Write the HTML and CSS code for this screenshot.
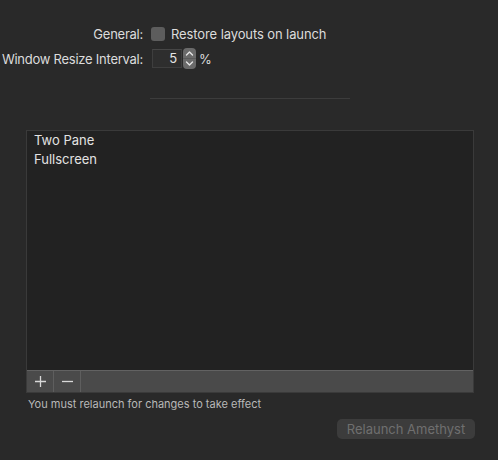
FILE: index.html
```html
<!DOCTYPE html>
<html>
<head>
<meta charset="utf-8">
<link rel="stylesheet" href="styles.css">
</head>
<body>
<div class="pane">
  <div class="form">
    <div class="label"><span>General:</span></div>
    <div class="control">
      <span class="checkbox"></span>
      <span class="text">Restore layouts on launch</span>
    </div>
    <div class="label"><span>Window Resize Interval:</span></div>
    <div class="control">
      <span class="numfield">5</span>
      <span class="stepper">
        <svg width="13" height="21" viewBox="0 0 13 21">
          <rect x="0" y="0" width="13" height="21" rx="4" fill="#6a6a6a"/>
          <line x1="0" y1="10.5" x2="13" y2="10.5" stroke="#5a5a5a" stroke-width="1"/>
          <path d="M3.5 7 L6.5 4 L9.5 7" fill="none" stroke="#e6e6e6" stroke-width="1.4" stroke-linecap="round" stroke-linejoin="round"/>
          <path d="M3.5 14 L6.5 17 L9.5 14" fill="none" stroke="#e6e6e6" stroke-width="1.4" stroke-linecap="round" stroke-linejoin="round"/>
        </svg>
      </span>
      <span class="text pct">%</span>
    </div>
  </div>
  <div class="separator"></div>
  <div class="listbox">
    <div class="list">
      <div class="row">Two Pane</div>
      <div class="row">Fullscreen</div>
    </div>
    <div class="toolbar">
      <span class="tbtn">
        <svg width="13" height="13" viewBox="0 0 13 13"><path d="M6.5 1 V12 M1 6.5 H12" stroke="#d8d8d8" stroke-width="1.3"/></svg>
      </span>
      <span class="tbtn">
        <svg width="13" height="13" viewBox="0 0 13 13"><path d="M1 6.5 H12" stroke="#d8d8d8" stroke-width="1.3"/></svg>
      </span>
      <span class="tfill"></span>
    </div>
  </div>
  <div class="note">You must relaunch for changes to take effect</div>
  <div class="actions">
    <button class="relaunch" disabled>Relaunch Amethyst</button>
  </div>
</div>
</body>
</html>
```
FILE: styles.css
```css
html, body {
  margin: 0;
  padding: 0;
  background: #292929;
  width: 498px;
  height: 460px;
  overflow: hidden;
}
body {
  font-family: "Inter", "Liberation Sans", sans-serif;
  font-size: 13px;
  color: #dcdcdc;
}
.pane {
  padding-top: 26px;
}
.form {
  display: grid;
  grid-template-columns: 143px auto;
  column-gap: 8px;
  row-gap: 6px;
  align-items: center;
}
.label {
  display: flex;
  justify-content: flex-end;
  white-space: nowrap;
  min-width: 0;
  letter-spacing: -0.25px;
}
.label span {
  flex: none;
}
.control {
  display: flex;
  align-items: center;
  letter-spacing: -0.1px;
}
.checkbox {
  width: 14px;
  height: 14px;
  border-radius: 3px;
  background: #5d5d5d;
  margin-right: 6px;
}
.numfield {
  width: 30px;
  height: 19px;
  box-sizing: border-box;
  margin-left: 1px;
  border: 1px solid #3e3e3e;
  border-top-color: #464646;
  background: #2e2e2e;
  text-align: right;
  padding-right: 4px;
  line-height: 17px;
  color: #e4e4e4;
}
.stepper {
  display: flex;
  margin-left: 1px;
  margin-right: 3px;
}
.separator {
  margin: 29px 0 0 150px;
  width: 200px;
  height: 1px;
  background: #3c3c3c;
}
.listbox {
  margin: 31px 0 0 26px;
  width: 448px;
  box-sizing: border-box;
  border: 1px solid #3a3a3a;
  background: #222222;
}
.list {
  height: 239px;
  box-sizing: border-box;
}
.row {
  padding-left: 7px;
  height: 19px;
  line-height: 19px;
  color: #e2e2e2;
}
.toolbar {
  display: flex;
  height: 21px;
  background: #4a4a4a;
  border-top: 1px solid #626262;
}
.tbtn {
  width: 26px;
  display: flex;
  align-items: center;
  justify-content: center;
  border-right: 1px solid #5e5e5e;
}
.tfill {
  flex: 1;
}
.note {
  margin: 4px 0 0 28px;
  font-size: 11px;
  color: #b8b8b8;
}
.actions {
  display: flex;
  justify-content: flex-end;
  padding-right: 23px;
  margin-top: 8px;
}
.relaunch {
  width: 138px;
  height: 20px;
  border: none;
  border-radius: 5px;
  background: #3c3c3c;
  color: #6f6f6f;
  font-family: inherit;
  font-size: 13px;
  padding: 0;
}
```
